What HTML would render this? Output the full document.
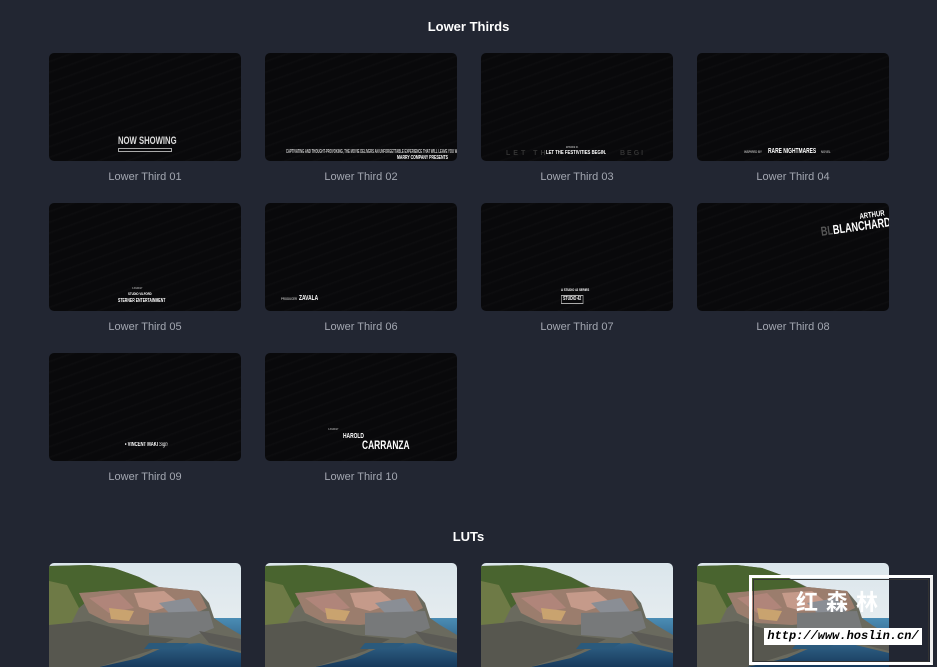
<!DOCTYPE html>
<html><head><meta charset="utf-8"><style>
*{margin:0;padding:0;box-sizing:border-box}
html,body{width:937px;height:667px;overflow:hidden;background:#222632;font-family:"Liberation Sans",sans-serif}
.h{position:absolute;left:0;width:937px;text-align:center;color:#fff;font-size:13px;font-weight:bold}
.c{position:absolute;width:192px;height:108px;border-radius:5px;overflow:hidden;background:#09090b;
background-image:repeating-linear-gradient(160deg,rgba(255,255,255,0) 0 7px,rgba(255,255,255,0.018) 8px,rgba(255,255,255,0) 10px);}
.l{position:absolute;width:192px;text-align:center;color:#a3a7b1;font-size:11px}
.t{position:absolute;color:#fff;font-weight:bold;white-space:nowrap;line-height:1;transform-origin:0 0;transform:scaleX(.7)}
.p{position:absolute;width:192px;height:104px;border-radius:5px 5px 0 0;overflow:hidden}
</style></head><body>
<div class="h" style="top:19px">Lower Thirds</div>

<div class="c" style="left:49px;top:53px"><div class="t" style="left:69px;top:83px;font-size:11px;color:#ddd">NOW SHOWING</div><div style="position:absolute;left:69px;top:95px;width:54px;height:4px;border:1px solid #aaa"></div></div>
<div class="c" style="left:265px;top:53px"><div class="t" style="left:21px;top:97px;font-size:5px;color:#ccc;transform:scaleX(.55)">CAPTIVATING AND THOUGHT-PROVOKING, THE MOVIE DELIVERS AN UNFORGETTABLE EXPERIENCE THAT WILL LEAVE YOU WANTING MORE</div><div class="t" style="left:132px;top:103px;font-size:5px">MARRY COMPANY PRESENTS</div></div>
<div class="c" style="left:481px;top:53px"><div class="t" style="left:85px;top:93px;font-size:3px;color:#aaa">EPISODE 01</div><div class="t" style="left:25px;top:97px;font-size:7px;color:#333;letter-spacing:3px;transform:none">LET TH</div><div class="t" style="left:65px;top:98px;font-size:5px;transform:scaleX(.85)">LET THE FESTIVITIES BEGIN.</div><div class="t" style="left:139px;top:97px;font-size:7px;color:#333;letter-spacing:2px;transform:none">BEGI</div></div>
<div class="c" style="left:697px;top:53px"><div class="t" style="left:47px;top:97px;font-size:4px;color:#aaa">INSPIRED BY</div><div class="t" style="left:71px;top:95px;font-size:7px">RARE NIGHTMARES</div><div class="t" style="left:124px;top:97px;font-size:4px;color:#aaa">NOVEL</div></div>
<div class="l" style="left:49px;top:171px">Lower Third 01</div>
<div class="l" style="left:265px;top:171px">Lower Third 02</div>
<div class="l" style="left:481px;top:171px">Lower Third 03</div>
<div class="l" style="left:697px;top:171px">Lower Third 04</div>

<div class="c" style="left:49px;top:203px"><div class="t" style="left:83px;top:84px;font-size:3px;color:#aaa">A FILM BY</div><div class="t" style="left:79px;top:89px;font-size:4px">STUDIO VILFORD</div><div class="t" style="left:69px;top:96px;font-size:5px">STERNER ENTERTAINMENT</div></div>
<div class="c" style="left:265px;top:203px"><div class="t" style="left:16px;top:94px;font-size:4px;color:#aaa">PRODUCER</div><div class="t" style="left:34px;top:92px;font-size:7px">ZAVALA</div></div>
<div class="c" style="left:481px;top:203px"><div class="t" style="left:80px;top:85px;font-size:4px">A STUDIO 42 SERIES</div><div class="t" style="left:80px;top:92px;font-size:5px;border:1px solid #aaa;padding:1px 2px">STUDIO 42</div></div>
<div class="c" style="left:697px;top:203px"><div class="t" style="left:162px;top:10px;font-size:8px;transform:rotate(-8deg) scaleX(.75)">ARTHUR</div><div class="t" style="left:123px;top:22px;font-size:13px;transform:rotate(-8deg) scaleX(.7)"><span style="color:#555">BL</span>BLANCHARD</div></div>
<div class="l" style="left:49px;top:321px">Lower Third 05</div>
<div class="l" style="left:265px;top:321px">Lower Third 06</div>
<div class="l" style="left:481px;top:321px">Lower Third 07</div>
<div class="l" style="left:697px;top:321px">Lower Third 08</div>

<div class="c" style="left:49px;top:353px"><div class="t" style="left:76px;top:89px;font-size:6px">&#8226; VINCENT MAKI <i style="font-weight:normal">Sign</i></div></div>
<div class="c" style="left:265px;top:353px"><div class="t" style="left:63px;top:75px;font-size:3px;color:#aaa">A FILM BY</div><div class="t" style="left:78px;top:80px;font-size:7px">HAROLD</div><div class="t" style="left:97px;top:86px;font-size:12px">CARRANZA</div></div>
<div class="l" style="left:49px;top:471px">Lower Third 09</div>
<div class="l" style="left:265px;top:471px">Lower Third 10</div>

<div class="h" style="top:529px">LUTs</div>

<svg width="0" height="0" style="position:absolute"><defs>
<linearGradient id="sky" x1="0" y1="0" x2="0" y2="1"><stop offset="0" stop-color="#dbe6ec"/><stop offset="1" stop-color="#eef1f2"/></linearGradient>
<linearGradient id="sea" x1="0" y1="0" x2="0" y2="1"><stop offset="0" stop-color="#4b8db5"/><stop offset="1" stop-color="#16385a"/></linearGradient>
<g id="ph">
<rect width="192" height="104" fill="url(#sky)"/>
<rect y="55" width="192" height="50" fill="url(#sea)"/>
<path d="M0 3 L40 2 L65 5 L90 14 L110 24 L150 28 L160 40 L165 55 L175 62 L192 72 L192 90 L150 80 L120 82 L90 95 L50 104 L0 104Z" fill="#6a6a5e"/>
<path d="M0 3 L40 2 L65 5 L90 14 L112 26 L80 30 L50 28 L30 45 L0 55Z" fill="#49642f"/>
<path d="M0 18 L18 22 L30 45 L20 65 L0 70Z" fill="#6e7a46"/>
<path d="M30 30 L110 24 L150 28 L158 45 L130 58 L95 62 L60 60 L40 50Z" fill="#9b7d6d"/>
<path d="M40 35 L70 30 L85 45 L60 50Z" fill="#b0857a"/>
<path d="M85 30 L115 28 L130 40 L105 48 L90 44Z" fill="#c59a8a"/>
<path d="M110 40 L140 35 L150 50 L125 55Z" fill="#8a8e95"/>
<path d="M60 45 L85 48 L80 58 L62 56Z" fill="#c9a36f"/>
<path d="M100 50 L160 48 L165 65 L140 75 L100 72Z" fill="#77797a"/>
<path d="M0 62 L40 58 L90 72 L125 76 L100 88 L50 104 L0 104Z" fill="#57574f"/>
<path d="M150 68 L192 76 L192 88 L160 80Z" fill="#5b5a55"/>
<path d="M100 80 L140 80 L130 86 L95 86Z" fill="#2b5a7c"/>
</g></defs></svg>
<div class="p" style="left:49px;top:563px"><svg width="192" height="104"><use href="#ph"/></svg></div>
<div class="p" style="left:265px;top:563px"><svg width="192" height="104"><use href="#ph"/></svg></div>
<div class="p" style="left:481px;top:563px"><svg width="192" height="104"><use href="#ph"/></svg></div>
<div class="p" style="left:697px;top:563px"><svg width="192" height="104"><use href="#ph"/></svg></div>

<div style="position:absolute;left:749px;top:575px;width:184px;height:90px;border:3px solid #fff;border-right-color:#eee"></div>
<div style="position:absolute;left:753px;top:579px;width:176px;height:83px;border:1px solid #333"></div>
<div style="position:absolute;left:889px;top:580px;width:38px;height:80px;background:#222632"></div>
<div style="position:absolute;left:796px;top:592px;color:#fff;font-size:22px;font-weight:bold;letter-spacing:8px;font-family:'Liberation Sans','Noto Sans CJK SC',sans-serif;line-height:1">红森林</div>
<div style="position:absolute;left:764px;top:628px;width:158px;height:17px;background:#fff;color:#000;font-family:'Liberation Mono',monospace;font-size:12px;font-weight:bold;font-style:italic;line-height:17px;text-align:center">http://www.hoslin.cn/</div>
</body></html>
